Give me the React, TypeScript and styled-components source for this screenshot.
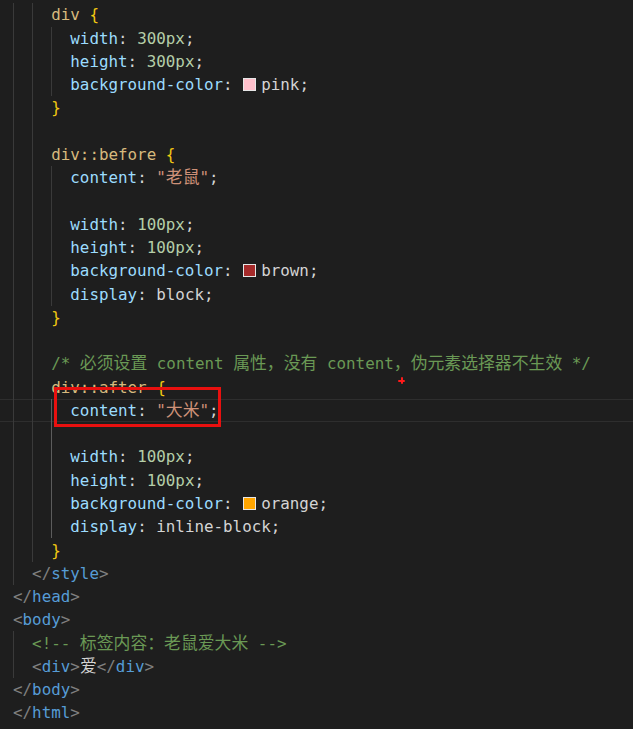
import React from "react";
import styled, { createGlobalStyle } from "styled-components";

const LINE_H = 23.27;
const CELL = 9.55;

const Global = createGlobalStyle`
  html, body {
    margin: 0;
    padding: 0;
    background: #1e1e1e;
    overflow: hidden;
  }
`;

type Kind =
  | "sel"
  | "brace"
  | "prop"
  | "num"
  | "str"
  | "text"
  | "comment"
  | "punct"
  | "tag"
  | "swatch";

type Tok = [Kind, string];

interface LineDef {
  level: number;
  toks: Tok[];
  active?: boolean;
  activeGuide?: boolean;
}

const colors: Record<Kind, string> = {
  sel: "#d7ba7d",
  brace: "#f2c812",
  prop: "#9cdcfe",
  num: "#b5cea8",
  str: "#ce9178",
  text: "#d4d4d4",
  comment: "#6a9955",
  punct: "#808080",
  tag: "#569cd6",
  swatch: "#ffffff",
};

const Editor = styled.div`
  position: relative;
  width: 633px;
  height: 729px;
  padding-top: 3.3px;
  box-sizing: border-box;
  background: #1e1e1e;
  font-family: "DejaVu Sans Mono", "Noto Sans CJK SC", monospace;
  font-size: 15.86px;
  display: flex;
  flex-direction: column;
`;

const Line = styled.div<{ $active?: boolean }>`
  height: ${LINE_H}px;
  flex: 0 0 ${LINE_H}px;
  box-sizing: border-box;
  padding-left: 13px;
  display: flex;
  align-items: center;
  white-space: pre;
  border-top: 1px solid ${(p) => (p.$active ? "#2e2e2e" : "transparent")};
  border-bottom: 1px solid ${(p) => (p.$active ? "#2e2e2e" : "transparent")};
`;

const Guide = styled.span<{ $bright?: boolean }>`
  align-self: stretch;
  flex: 0 0 ${CELL * 2}px;
  box-sizing: border-box;
  border-left: 1px solid ${(p) => (p.$bright ? "#5c5c5c" : "#3a3a3a")};
  margin-top: -1px;
  margin-bottom: -1px;
`;

const Code = styled.span`
  display: inline-flex;
  align-items: center;
  line-height: 1.2;
`;

const Token = styled.span<{ $kind: Kind }>`
  color: ${(p) => colors[p.$kind]};
`;

const Cjk = styled.span`
  font-family: "Noto Sans CJK SC", sans-serif;
  font-size: 16.85px;
  line-height: 1;
`;

const Swatch = styled.span<{ $color: string }>`
  display: inline-block;
  width: 13px;
  height: 13px;
  box-sizing: border-box;
  border: 1px solid #e6e6e6;
  background: ${(p) => p.$color};
  margin: 0 5px 0 1px;
`;

const RedBox = styled.div`
  position: absolute;
  left: 54px;
  top: 387px;
  width: 167px;
  height: 40px;
  box-sizing: border-box;
  border: 3px solid #e8100f;
  pointer-events: none;
`;

const Cross = styled.div`
  position: absolute;
  left: 398px;
  top: 377px;
  width: 7px;
  height: 7px;
  &::before,
  &::after {
    content: "";
    position: absolute;
    background: #ff1a1a;
    border-radius: 1px;
    filter: blur(0.4px);
  }
  &::before {
    left: 0;
    top: 2.5px;
    width: 7px;
    height: 2px;
  }
  &::after {
    left: 2.5px;
    top: 0;
    width: 2px;
    height: 7px;
  }
`;

const prop = (name: string, vals: Tok[]): Tok[] => [
  ["prop", name],
  ["text", ": "],
  ...vals,
  ["text", ";"],
];

const lines: LineDef[] = [
  { level: 2, toks: [["sel", "div"], ["text", " "], ["brace", "{"]] },
  { level: 3, toks: prop("width", [["num", "300px"]]) },
  { level: 3, toks: prop("height", [["num", "300px"]]) },
  { level: 3, toks: prop("background-color", [["swatch", "#ffc0cb"], ["text", "pink"]]) },
  { level: 2, toks: [["brace", "}"]] },
  { level: 2, toks: [] },
  { level: 2, toks: [["sel", "div::before"], ["text", " "], ["brace", "{"]] },
  { level: 3, toks: prop("content", [["str", "\"老鼠\""]]) },
  { level: 3, toks: [] },
  { level: 3, toks: prop("width", [["num", "100px"]]) },
  { level: 3, toks: prop("height", [["num", "100px"]]) },
  { level: 3, toks: prop("background-color", [["swatch", "#a52a2a"], ["text", "brown"]]) },
  { level: 3, toks: prop("display", [["text", "block"]]) },
  { level: 2, toks: [["brace", "}"]] },
  { level: 2, toks: [] },
  {
    level: 2,
    toks: [["comment", "/* 必须设置 content 属性，没有 content，伪元素选择器不生效 */"]],
  },
  { level: 2, toks: [["sel", "div::after"], ["text", " "], ["brace", "{"]] },
  { level: 3, toks: prop("content", [["str", "\"大米\""]]), active: true, activeGuide: true },
  { level: 3, toks: [], activeGuide: true },
  { level: 3, toks: prop("width", [["num", "100px"]]), activeGuide: true },
  { level: 3, toks: prop("height", [["num", "100px"]]), activeGuide: true },
  {
    level: 3,
    toks: prop("background-color", [["swatch", "#ffa500"], ["text", "orange"]]),
    activeGuide: true,
  },
  { level: 3, toks: prop("display", [["text", "inline-block"]]), activeGuide: true },
  { level: 2, toks: [["brace", "}"]] },
  { level: 1, toks: [["punct", "</"], ["tag", "style"], ["punct", ">"]] },
  { level: 0, toks: [["punct", "</"], ["tag", "head"], ["punct", ">"]] },
  { level: 0, toks: [["punct", "<"], ["tag", "body"], ["punct", ">"]] },
  { level: 1, toks: [["comment", "<!-- 标签内容：老鼠爱大米 -->"]] },
  {
    level: 1,
    toks: [
      ["punct", "<"],
      ["tag", "div"],
      ["punct", ">"],
      ["text", "爱"],
      ["punct", "</"],
      ["tag", "div"],
      ["punct", ">"],
    ],
  },
  { level: 0, toks: [["punct", "</"], ["tag", "body"], ["punct", ">"]] },
  { level: 0, toks: [["punct", "</"], ["tag", "html"], ["punct", ">"]] },
];

const CJK_RE = /([\u3000-\u303f\u4e00-\u9fff\uff00-\uffef]+)/;

function renderText(t: string) {
  return t.split(CJK_RE).map((part, i) =>
    i % 2 === 1 ? <Cjk key={i}>{part}</Cjk> : part
  );
}

export default function App() {
  return (
    <>
      <Global />
      <Editor>
        {lines.map((l, i) => (
          <Line key={i} $active={l.active}>
            {Array.from({ length: l.level }).map((_, g) => (
              <Guide key={g} $bright={l.activeGuide && g === 2} />
            ))}
            <Code>
              {l.toks.map(([k, t], j) =>
                k === "swatch" ? (
                  <Swatch key={j} $color={t} />
                ) : (
                  <Token key={j} $kind={k}>
                    {renderText(t)}
                  </Token>
                )
              )}
            </Code>
          </Line>
        ))}
        <RedBox />
        <Cross />
      </Editor>
    </>
  );
}
